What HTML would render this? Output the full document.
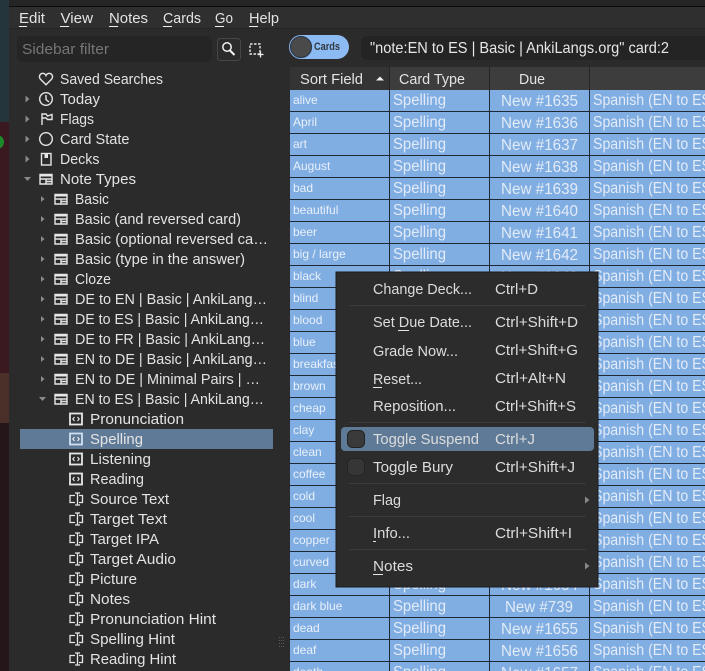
<!DOCTYPE html>
<html><head><meta charset="utf-8"><style>
html,body{margin:0;padding:0;width:705px;height:671px;overflow:hidden;background:#2b2b2b}
svg{display:block}
text{font-family:"Liberation Sans",sans-serif;font-size:15px;fill:#e3e3e3}
.s text{font-size:15px}
.r{font-size:12px;fill:#e8f0fb}
.b{font-size:15.5px;fill:#e2ebf8}
.m{font-size:15px;fill:#dcdcdc}
.i{fill:none;stroke:#e6e6e6;stroke-width:1.4}
.a{fill:#8a8a8a}
.l{fill:#1f2935}
</style></head><body>
<svg width="705" height="671" viewBox="0 0 705 671" xmlns="http://www.w3.org/2000/svg" lengthAdjust="spacingAndGlyphs">
<!-- wallpaper -->
<rect x="0" y="0" width="9" height="122" fill="#24353b"/>
<rect x="0" y="122" width="9" height="251" fill="#3a1a20"/>
<rect x="0" y="373" width="9" height="50" fill="#4b2f29"/>
<rect x="0" y="423" width="9" height="248" fill="#241619"/>
<circle cx="-3" cy="142" r="7" fill="#1a8a2b"/>
<!-- window -->
<rect x="9" y="0" width="696" height="671" fill="#2b2b2b"/>
<rect x="9" y="0" width="696" height="6" fill="#252525"/>
<rect x="9" y="6" width="696" height="1" fill="#0c0c0c"/>
<rect x="9" y="7" width="696" height="21" fill="#2f2f2f"/>
<rect x="9" y="28" width="696" height="1" fill="#262626"/>
<!-- menu bar -->
<g>
<text x="19" y="23" textLength="26" lengthAdjust="spacingAndGlyphs">Edit</text><rect x="19" y="26" width="8" height="1" fill="#eee"/>
<text x="60.500" y="23" textLength="32.500" lengthAdjust="spacingAndGlyphs">View</text><rect x="60" y="26" width="9" height="1" fill="#eee"/>
<text x="109" y="23" textLength="39" lengthAdjust="spacingAndGlyphs">Notes</text><rect x="109" y="26" width="9" height="1" fill="#eee"/>
<text x="163" y="23" textLength="38" lengthAdjust="spacingAndGlyphs">Cards</text><rect x="163" y="26" width="9" height="1" fill="#eee"/>
<text x="215" y="23" textLength="18" lengthAdjust="spacingAndGlyphs">Go</text><rect x="215" y="26" width="9" height="1" fill="#eee"/>
<text x="249" y="23" textLength="30" lengthAdjust="spacingAndGlyphs">Help</text><rect x="249" y="26" width="9" height="1" fill="#eee"/>
</g>
<!-- toolbar -->
<rect x="17" y="36" width="195" height="26" rx="5" fill="#252525"/>
<text x="22" y="54" textLength="87" lengthAdjust="spacingAndGlyphs" style="fill:#767676">Sidebar filter</text>
<rect x="217.500" y="38.500" width="23" height="22" rx="3" fill="#2b2b2b" stroke="#474747"/>
<circle cx="227" cy="47" r="4.200" fill="none" stroke="#f2f2f2" stroke-width="1.500"/>
<path d="M230 50.500L234.500 55" stroke="#f2f2f2" stroke-width="2" fill="none"/>
<rect x="250" y="44" width="10" height="10" fill="none" stroke="#e8e8e8" stroke-width="1.400" stroke-dasharray="2.500 1.500"/>
<path d="M260.500 51.500V57.500M257.500 54.500H263.500" stroke="#eee" stroke-width="1.300"/>
<rect x="289" y="35" width="60" height="24" rx="12" fill="#8cbaf2"/>
<circle cx="301" cy="47" r="10.500" fill="#4a4a4a" stroke="#2e3a48" stroke-width="1.200"/>
<text x="314" y="50" textLength="26" lengthAdjust="spacingAndGlyphs" style="font-size:11px;font-weight:bold;fill:#2f3740">Cards</text>
<rect x="361" y="36" width="350" height="24" rx="6" fill="#242424"/>
<text x="370" y="53" textLength="299" lengthAdjust="spacingAndGlyphs" style="font-size:16px;fill:#e6e6e6">"note:EN to ES | Basic | AnkiLangs.org" card:2</text>
<!-- sidebar -->
<g>
<text x="60" y="84" textLength="103" lengthAdjust="spacingAndGlyphs">Saved Searches</text>
<text x="60" y="104" textLength="40" lengthAdjust="spacingAndGlyphs">Today</text>
<text x="60" y="124" textLength="34" lengthAdjust="spacingAndGlyphs">Flags</text>
<text x="60" y="144" textLength="69.500" lengthAdjust="spacingAndGlyphs">Card State</text>
<text x="60" y="164" textLength="39.500" lengthAdjust="spacingAndGlyphs">Decks</text>
<text x="60" y="184" textLength="76" lengthAdjust="spacingAndGlyphs">Note Types</text>
<text x="75" y="204" textLength="34" lengthAdjust="spacingAndGlyphs">Basic</text>
<text x="75" y="224" textLength="166" lengthAdjust="spacingAndGlyphs">Basic (and reversed card)</text>
<text x="75" y="244" textLength="193" lengthAdjust="spacingAndGlyphs">Basic (optional reversed ca…</text>
<text x="75" y="264" textLength="170" lengthAdjust="spacingAndGlyphs">Basic (type in the answer)</text>
<text x="75" y="284" textLength="36" lengthAdjust="spacingAndGlyphs">Cloze</text>
<text x="75" y="304" textLength="192" lengthAdjust="spacingAndGlyphs">DE to EN | Basic | AnkiLang…</text>
<text x="75" y="324" textLength="189" lengthAdjust="spacingAndGlyphs">DE to ES | Basic | AnkiLang…</text>
<text x="75" y="344" textLength="190" lengthAdjust="spacingAndGlyphs">DE to FR | Basic | AnkiLang…</text>
<text x="75" y="364" textLength="192" lengthAdjust="spacingAndGlyphs">EN to DE | Basic | AnkiLang…</text>
<text x="75" y="384" textLength="185" lengthAdjust="spacingAndGlyphs">EN to DE | Minimal Pairs | …</text>
<text x="75" y="404" textLength="189" lengthAdjust="spacingAndGlyphs">EN to ES | Basic | AnkiLang…</text>
<rect x="20" y="429" width="253" height="20" fill="#5f7a97"/>
<text x="90" y="424" textLength="94" lengthAdjust="spacingAndGlyphs">Pronunciation</text>
<text x="90" y="444" textLength="53" lengthAdjust="spacingAndGlyphs">Spelling</text>
<text x="90" y="464" textLength="61" lengthAdjust="spacingAndGlyphs">Listening</text>
<text x="90" y="484" textLength="54" lengthAdjust="spacingAndGlyphs">Reading</text>
<text x="90" y="504" textLength="79" lengthAdjust="spacingAndGlyphs">Source Text</text>
<text x="90" y="524" textLength="77" lengthAdjust="spacingAndGlyphs">Target Text</text>
<text x="90" y="544" textLength="69" lengthAdjust="spacingAndGlyphs">Target IPA</text>
<text x="90" y="564" textLength="86" lengthAdjust="spacingAndGlyphs">Target Audio</text>
<text x="90" y="584" textLength="47" lengthAdjust="spacingAndGlyphs">Picture</text>
<text x="90" y="604" textLength="40" lengthAdjust="spacingAndGlyphs">Notes</text>
<text x="90" y="624" textLength="126" lengthAdjust="spacingAndGlyphs">Pronunciation Hint</text>
<text x="90" y="644" textLength="85" lengthAdjust="spacingAndGlyphs">Spelling Hint</text>
<text x="90" y="664" textLength="86" lengthAdjust="spacingAndGlyphs">Reading Hint</text>
</g>
<!-- sidebar arrows -->
<g class="a">
<path d="M25.500 95.500L29.500 99L25.500 102.500Z"/><path d="M25.500 115.500L29.500 119L25.500 122.500Z"/><path d="M25.500 135.500L29.500 139L25.500 142.500Z"/><path d="M25.500 155.500L29.500 159L25.500 162.500Z"/>
<path d="M24 177H31L27.500 181Z"/>
<path d="M41 196L44.500 199L41 202Z"/><path d="M41 216L44.500 219L41 222Z"/><path d="M41 236L44.500 239L41 242Z"/><path d="M41 256L44.500 259L41 262Z"/><path d="M41 276L44.500 279L41 282Z"/><path d="M41 296L44.500 299L41 302Z"/><path d="M41 316L44.500 319L41 322Z"/><path d="M41 336L44.500 339L41 342Z"/><path d="M41 356L44.500 359L41 362Z"/><path d="M41 376L44.500 379L41 382Z"/>
<path d="M39 397H46L42.500 401Z"/>
</g>
<!-- top level icons -->
<g class="i">
<path d="M46 84.800L40.500 79.300C38 76 40.500 73 43.500 73.400Q45.300 73.700 46 75.500Q46.700 73.700 48.500 73.400C51.500 73 54 76 51.500 79.300Z"/>
<circle cx="46" cy="99" r="6.300"/><path d="M46 95V99.500L49 102"/>
<path d="M42 125V114H46L47.500 116L52 114.500V119.500H47.500L46 118H42"/>
<circle cx="46" cy="139" r="6.300"/>
<rect x="41.500" y="153.500" width="9.500" height="11.500"/>
</g>
<rect x="44.500" y="153" width="3.500" height="5" fill="#e6e6e6"/>
<!-- note type icons -->
<g class="i">
<path d="M40 174.500H52V184H40ZM40 179H52M46 179V184M46 181.500H52" /><path d="M55 0"/>
<path d="M55 194.500H67V204H55ZM55 199H67M61 199V204M61 201.500H67"/>
<path d="M55 214.500H67V224H55ZM55 219H67M61 219V224M61 221.500H67"/>
<path d="M55 234.500H67V244H55ZM55 239H67M61 239V244M61 241.500H67"/>
<path d="M55 254.500H67V264H55ZM55 259H67M61 259V264M61 261.500H67"/>
<path d="M55 274.500H67V284H55ZM55 279H67M61 279V284M61 281.500H67"/>
<path d="M55 294.500H67V304H55ZM55 299H67M61 299V304M61 301.500H67"/>
<path d="M55 314.500H67V324H55ZM55 319H67M61 319V324M61 321.500H67"/>
<path d="M55 334.500H67V344H55ZM55 339H67M61 339V344M61 341.500H67"/>
<path d="M55 354.500H67V364H55ZM55 359H67M61 359V364M61 361.500H67"/>
<path d="M55 374.500H67V384H55ZM55 379H67M61 379V384M61 381.500H67"/>
<path d="M55 394.500H67V404H55ZM55 399H67M61 399V404M61 401.500H67"/>
</g>
<g fill="#e6e6e6">
<rect x="40" y="174" width="12" height="2.500"/><rect x="55" y="194" width="12" height="2.500"/><rect x="55" y="214" width="12" height="2.500"/><rect x="55" y="234" width="12" height="2.500"/><rect x="55" y="254" width="12" height="2.500"/><rect x="55" y="274" width="12" height="2.500"/><rect x="55" y="294" width="12" height="2.500"/><rect x="55" y="314" width="12" height="2.500"/><rect x="55" y="334" width="12" height="2.500"/><rect x="55" y="354" width="12" height="2.500"/><rect x="55" y="374" width="12" height="2.500"/><rect x="55" y="394" width="12" height="2.500"/>
</g>
<!-- template icons -->
<g fill="none" stroke="#e6e6e6" stroke-width="1.800">
<rect x="70" y="413.500" width="12" height="11"/>
<rect x="70" y="433.500" width="12" height="11" stroke="#cfe0f2"/>
<rect x="70" y="453.500" width="12" height="11"/>
<rect x="70" y="473.500" width="12" height="11"/>
</g>
<g fill="none" stroke="#eee" stroke-width="1.100">
<path d="M74.500 417L72.800 419L74.500 421M77.500 417L79.200 419L77.500 421"/>
<path d="M74.500 437L72.800 439L74.500 441M77.500 437L79.200 439L77.500 441"/>
<path d="M74.500 457L72.800 459L74.500 461M77.500 457L79.200 459L77.500 461"/>
<path d="M74.500 477L72.800 479L74.500 481M77.500 477L79.200 479L77.500 481"/>
</g>
<!-- field icons -->
<g fill="none" stroke="#e6e6e6" stroke-width="1.300">
<path d="M75 495.500H70V502.500H75M79 495.500H82.500V502.500H79M75 493H80M77.500 493V505M75 505H80"/>
<path d="M75 515.500H70V522.500H75M79 515.500H82.500V522.500H79M75 513H80M77.500 513V525M75 525H80"/>
<path d="M75 535.500H70V542.500H75M79 535.500H82.500V542.500H79M75 533H80M77.500 533V545M75 545H80"/>
<path d="M75 555.500H70V562.500H75M79 555.500H82.500V562.500H79M75 553H80M77.500 553V565M75 565H80"/>
<path d="M75 575.500H70V582.500H75M79 575.500H82.500V582.500H79M75 573H80M77.500 573V585M75 585H80"/>
<path d="M75 595.500H70V602.500H75M79 595.500H82.500V602.500H79M75 593H80M77.500 593V605M75 605H80"/>
<path d="M75 615.500H70V622.500H75M79 615.500H82.500V622.500H79M75 613H80M77.500 613V625M75 625H80"/>
<path d="M75 635.500H70V642.500H75M79 635.500H82.500V642.500H79M75 633H80M77.500 633V645M75 645H80"/>
<path d="M75 655.500H70V662.500H75M79 655.500H82.500V662.500H79M75 653H80M77.500 653V665M75 665H80"/>
</g>
<!-- splitter grip -->
<path d="M279 637.500H284M279 640.500H284M279 643.500H284M279 646.500H284" stroke="#5a5a5a" stroke-dasharray="1 1" fill="none"/>
<!-- table header -->
<rect x="290" y="67" width="415" height="23" fill="#3d3d3d"/>
<rect x="290" y="67" width="99" height="23" fill="#343434"/>
<rect x="389" y="67" width="1" height="23" fill="#252525"/><rect x="489" y="67" width="1" height="23" fill="#252525"/><rect x="589" y="67" width="1" height="23" fill="#252525"/>
<text x="300" y="84" textLength="63" lengthAdjust="spacingAndGlyphs">Sort Field</text>
<path d="M376 80.500H384L380 76.500Z" fill="#eee"/>
<text x="399" y="84" textLength="66" lengthAdjust="spacingAndGlyphs">Card Type</text>
<text x="519" y="84" textLength="26" lengthAdjust="spacingAndGlyphs">Due</text>
<!-- table body -->
<rect x="290" y="90" width="415" height="581" fill="#81aee2"/>
<rect class="l" x="389" y="90" width="1" height="581"/><rect class="l" x="489" y="90" width="1" height="581"/><rect class="l" x="589" y="90" width="1" height="581"/>
<g class="l">
<rect x="290" y="111" width="415" height="1"/><rect x="290" y="133" width="415" height="1"/><rect x="290" y="155" width="415" height="1"/><rect x="290" y="177" width="415" height="1"/><rect x="290" y="199" width="415" height="1"/><rect x="290" y="221" width="415" height="1"/><rect x="290" y="243" width="415" height="1"/><rect x="290" y="265" width="415" height="1"/><rect x="290" y="287" width="415" height="1"/><rect x="290" y="309" width="415" height="1"/><rect x="290" y="331" width="415" height="1"/><rect x="290" y="353" width="415" height="1"/><rect x="290" y="375" width="415" height="1"/><rect x="290" y="397" width="415" height="1"/><rect x="290" y="419" width="415" height="1"/><rect x="290" y="441" width="415" height="1"/><rect x="290" y="463" width="415" height="1"/><rect x="290" y="485" width="415" height="1"/><rect x="290" y="507" width="415" height="1"/><rect x="290" y="529" width="415" height="1"/><rect x="290" y="551" width="415" height="1"/><rect x="290" y="573" width="415" height="1"/><rect x="290" y="595" width="415" height="1"/><rect x="290" y="617" width="415" height="1"/><rect x="290" y="639" width="415" height="1"/><rect x="290" y="661" width="415" height="1"/>
</g>
<!-- sort field column -->
<g>
<text class="r" x="293" y="104">alive</text><text class="r" x="293" y="126">April</text><text class="r" x="293" y="148">art</text><text class="r" x="293" y="170">August</text><text class="r" x="293" y="192">bad</text><text class="r" x="293" y="214">beautiful</text><text class="r" x="293" y="236">beer</text><text class="r" x="293" y="258">big / large</text><text class="r" x="293" y="280">black</text><text class="r" x="293" y="302">blind</text><text class="r" x="293" y="324">blood</text><text class="r" x="293" y="346">blue</text><text class="r" x="293" y="368">breakfast</text><text class="r" x="293" y="390">brown</text><text class="r" x="293" y="412">cheap</text><text class="r" x="293" y="434">clay</text><text class="r" x="293" y="456">clean</text><text class="r" x="293" y="478">coffee</text><text class="r" x="293" y="500">cold</text><text class="r" x="293" y="522">cool</text><text class="r" x="293" y="544">copper</text><text class="r" x="293" y="566">curved</text><text class="r" x="293" y="588">dark</text><text class="r" x="293" y="610">dark blue</text><text class="r" x="293" y="632">dead</text><text class="r" x="293" y="654">deaf</text><text class="r" x="293" y="676">death</text>
</g>
<!-- card type column -->
<g>
<text class="b" x="393" y="105" textLength="53" lengthAdjust="spacingAndGlyphs">Spelling</text><text class="b" x="393" y="127" textLength="53" lengthAdjust="spacingAndGlyphs">Spelling</text><text class="b" x="393" y="149" textLength="53" lengthAdjust="spacingAndGlyphs">Spelling</text><text class="b" x="393" y="171" textLength="53" lengthAdjust="spacingAndGlyphs">Spelling</text><text class="b" x="393" y="193" textLength="53" lengthAdjust="spacingAndGlyphs">Spelling</text><text class="b" x="393" y="215" textLength="53" lengthAdjust="spacingAndGlyphs">Spelling</text><text class="b" x="393" y="237" textLength="53" lengthAdjust="spacingAndGlyphs">Spelling</text><text class="b" x="393" y="259" textLength="53" lengthAdjust="spacingAndGlyphs">Spelling</text><text class="b" x="393" y="281" textLength="53" lengthAdjust="spacingAndGlyphs">Spelling</text><text class="b" x="393" y="589" textLength="53" lengthAdjust="spacingAndGlyphs">Spelling</text><text class="b" x="393" y="611" textLength="53" lengthAdjust="spacingAndGlyphs">Spelling</text><text class="b" x="393" y="633" textLength="53" lengthAdjust="spacingAndGlyphs">Spelling</text><text class="b" x="393" y="655" textLength="53" lengthAdjust="spacingAndGlyphs">Spelling</text><text class="b" x="393" y="677" textLength="53" lengthAdjust="spacingAndGlyphs">Spelling</text>
</g>
<!-- due column -->
<g>
<text class="b" x="501" y="106" textLength="77" lengthAdjust="spacingAndGlyphs">New #1635</text><text class="b" x="501" y="128" textLength="77" lengthAdjust="spacingAndGlyphs">New #1636</text><text class="b" x="501" y="150" textLength="77" lengthAdjust="spacingAndGlyphs">New #1637</text><text class="b" x="501" y="172" textLength="77" lengthAdjust="spacingAndGlyphs">New #1638</text><text class="b" x="501" y="194" textLength="77" lengthAdjust="spacingAndGlyphs">New #1639</text><text class="b" x="501" y="216" textLength="77" lengthAdjust="spacingAndGlyphs">New #1640</text><text class="b" x="501" y="238" textLength="77" lengthAdjust="spacingAndGlyphs">New #1641</text><text class="b" x="501" y="260" textLength="77" lengthAdjust="spacingAndGlyphs">New #1642</text><text class="b" x="501" y="282" textLength="77" lengthAdjust="spacingAndGlyphs">New #1643</text><text class="b" x="501" y="590" textLength="77" lengthAdjust="spacingAndGlyphs">New #1654</text><text class="b" x="505" y="612" textLength="68" lengthAdjust="spacingAndGlyphs">New #739</text><text class="b" x="501" y="634" textLength="77" lengthAdjust="spacingAndGlyphs">New #1655</text><text class="b" x="501" y="656" textLength="77" lengthAdjust="spacingAndGlyphs">New #1656</text><text class="b" x="501" y="678" textLength="77" lengthAdjust="spacingAndGlyphs">New #1657</text>
</g>
<!-- deck column -->
<g>
<text class="b" x="593" y="105" textLength="118" lengthAdjust="spacingAndGlyphs">Spanish (EN to ES</text><text class="b" x="593" y="127" textLength="118" lengthAdjust="spacingAndGlyphs">Spanish (EN to ES</text><text class="b" x="593" y="149" textLength="118" lengthAdjust="spacingAndGlyphs">Spanish (EN to ES</text><text class="b" x="593" y="171" textLength="118" lengthAdjust="spacingAndGlyphs">Spanish (EN to ES</text><text class="b" x="593" y="193" textLength="118" lengthAdjust="spacingAndGlyphs">Spanish (EN to ES</text><text class="b" x="593" y="215" textLength="118" lengthAdjust="spacingAndGlyphs">Spanish (EN to ES</text><text class="b" x="593" y="237" textLength="118" lengthAdjust="spacingAndGlyphs">Spanish (EN to ES</text><text class="b" x="593" y="259" textLength="118" lengthAdjust="spacingAndGlyphs">Spanish (EN to ES</text><text class="b" x="593" y="281" textLength="118" lengthAdjust="spacingAndGlyphs">Spanish (EN to ES</text><text class="b" x="593" y="303" textLength="118" lengthAdjust="spacingAndGlyphs">Spanish (EN to ES</text><text class="b" x="593" y="325" textLength="118" lengthAdjust="spacingAndGlyphs">Spanish (EN to ES</text><text class="b" x="593" y="347" textLength="118" lengthAdjust="spacingAndGlyphs">Spanish (EN to ES</text><text class="b" x="593" y="369" textLength="118" lengthAdjust="spacingAndGlyphs">Spanish (EN to ES</text><text class="b" x="593" y="391" textLength="118" lengthAdjust="spacingAndGlyphs">Spanish (EN to ES</text><text class="b" x="593" y="413" textLength="118" lengthAdjust="spacingAndGlyphs">Spanish (EN to ES</text><text class="b" x="593" y="435" textLength="118" lengthAdjust="spacingAndGlyphs">Spanish (EN to ES</text><text class="b" x="593" y="457" textLength="118" lengthAdjust="spacingAndGlyphs">Spanish (EN to ES</text><text class="b" x="593" y="479" textLength="118" lengthAdjust="spacingAndGlyphs">Spanish (EN to ES</text><text class="b" x="593" y="501" textLength="118" lengthAdjust="spacingAndGlyphs">Spanish (EN to ES</text><text class="b" x="593" y="523" textLength="118" lengthAdjust="spacingAndGlyphs">Spanish (EN to ES</text><text class="b" x="593" y="545" textLength="118" lengthAdjust="spacingAndGlyphs">Spanish (EN to ES</text><text class="b" x="593" y="567" textLength="118" lengthAdjust="spacingAndGlyphs">Spanish (EN to ES</text><text class="b" x="593" y="589" textLength="118" lengthAdjust="spacingAndGlyphs">Spanish (EN to ES</text><text class="b" x="593" y="611" textLength="118" lengthAdjust="spacingAndGlyphs">Spanish (EN to ES</text><text class="b" x="593" y="633" textLength="118" lengthAdjust="spacingAndGlyphs">Spanish (EN to ES</text><text class="b" x="593" y="655" textLength="118" lengthAdjust="spacingAndGlyphs">Spanish (EN to ES</text><text class="b" x="593" y="677" textLength="118" lengthAdjust="spacingAndGlyphs">Spanish (EN to ES</text>
</g>
<!-- context menu -->
<rect x="336" y="272" width="262" height="315" fill="#2c2c2c" stroke="#1c1c1c"/>
<g fill="#3b3b3b">
<rect x="349" y="305" width="237" height="1"/><rect x="349" y="422" width="237" height="1"/><rect x="349" y="483" width="237" height="1"/><rect x="349" y="516" width="237" height="1"/><rect x="349" y="549" width="237" height="1"/>
</g>
<rect x="341" y="427" width="253" height="24" rx="4" fill="#5f7a97"/>
<rect x="347.500" y="430.500" width="17" height="17" rx="5" fill="#3a3a3a" stroke="#222"/>
<rect x="347.500" y="458.500" width="17" height="17" rx="5" fill="#363636" stroke="#242424"/>
<g>
<text class="m" x="373" y="294" textLength="99" lengthAdjust="spacingAndGlyphs">Change Deck...</text><text class="m" x="495" y="294" textLength="43" lengthAdjust="spacingAndGlyphs">Ctrl+D</text>
<text class="m" x="373" y="327" textLength="99" lengthAdjust="spacingAndGlyphs">Set Due Date...</text><text class="m" x="495" y="327" textLength="83" lengthAdjust="spacingAndGlyphs">Ctrl+Shift+D</text>
<text class="m" x="373" y="356" textLength="85" lengthAdjust="spacingAndGlyphs">Grade Now...</text><text class="m" x="495" y="355" textLength="83" lengthAdjust="spacingAndGlyphs">Ctrl+Shift+G</text>
<text class="m" x="373" y="384" textLength="49" lengthAdjust="spacingAndGlyphs">Reset...</text><text class="m" x="495" y="383" textLength="71" lengthAdjust="spacingAndGlyphs">Ctrl+Alt+N</text>
<text class="m" x="373" y="411" textLength="83" lengthAdjust="spacingAndGlyphs">Reposition...</text><text class="m" x="495" y="411" textLength="81" lengthAdjust="spacingAndGlyphs">Ctrl+Shift+S</text>
<text class="m" x="373" y="444" textLength="106" lengthAdjust="spacingAndGlyphs">Toggle Suspend</text><text class="m" x="495" y="444" textLength="40" lengthAdjust="spacingAndGlyphs">Ctrl+J</text>
<text class="m" x="373" y="472" textLength="80" lengthAdjust="spacingAndGlyphs">Toggle Bury</text><text class="m" x="495" y="472" textLength="80" lengthAdjust="spacingAndGlyphs">Ctrl+Shift+J</text>
<text class="m" x="373" y="505" textLength="28" lengthAdjust="spacingAndGlyphs">Flag</text>
<text class="m" x="373" y="538" textLength="37" lengthAdjust="spacingAndGlyphs">Info...</text><text class="m" x="495" y="538" textLength="77" lengthAdjust="spacingAndGlyphs">Ctrl+Shift+I</text>
<text class="m" x="373" y="571" textLength="40" lengthAdjust="spacingAndGlyphs">Notes</text>
</g>
<g fill="#e6e6e6">
<rect x="398" y="330" width="11" height="1"/><rect x="373" y="387" width="9" height="1"/><rect x="373" y="541" width="3" height="1"/><rect x="373" y="574" width="10" height="1"/>
</g>
<path d="M585 496.500L589.500 500L585 503.500ZM585 562.500L589.500 566L585 569.500Z" fill="#8a8a8a"/>
</svg>
</body></html>
